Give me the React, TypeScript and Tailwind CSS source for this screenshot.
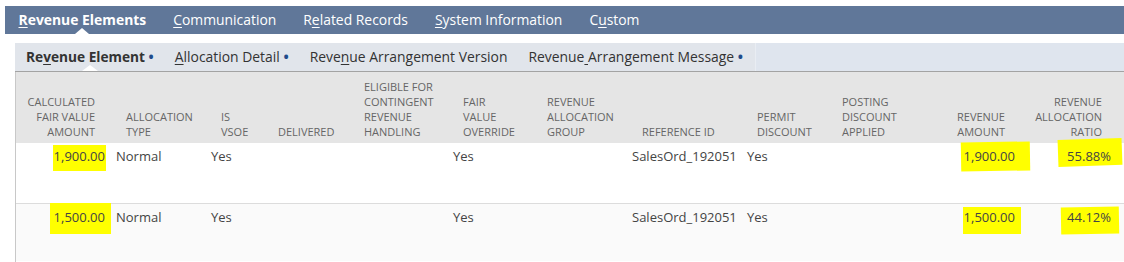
import React from "react";

const topTabs = [
  { pre: "", u: "R", post: "evenue Elements", active: true },
  { pre: "", u: "C", post: "ommunication" },
  { pre: "R", u: "e", post: "lated Records" },
  { pre: "", u: "S", post: "ystem Information" },
  { pre: "C", u: "u", post: "stom" },
];

const subTabs = [
  { pre: "Re", u: "v", post: "enue Element", dot: true, active: true },
  { pre: "", u: "A", post: "llocation Detail", dot: true },
  { pre: "Reve", u: "n", post: "ue Arrangement Version" },
  { pre: "Revenue", u: " ", post: "Arrangement Message", dot: true },
];

// header cells: label lines, alignment
const columns = [
  { w: "w-[95px]", lines: ["Calculated", "Fair Value", "Amount"], right: true },
  { w: "w-[95px]", lines: ["Allocation", "Type"] },
  { w: "w-[57px]", lines: ["Is", "VSOE"] },
  { w: "w-[86px]", lines: ["Delivered"] },
  { w: "w-[99px]", lines: ["Eligible For", "Contingent", "Revenue", "Handling"] },
  { w: "w-[84px]", lines: ["Fair", "Value", "Override"] },
  { w: "w-[95px]", lines: ["Revenue", "Allocation", "Group"] },
  { w: "w-[115px]", lines: ["Reference ID"] },
  { w: "w-[85px]", lines: ["Permit", "Discount"] },
  { w: "w-[94px]", lines: ["Posting", "Discount", "Applied"] },
  { w: "w-[100px]", lines: ["Revenue", "Amount"], right: true },
  { w: "", lines: ["Revenue", "Allocation", "Ratio"], right: true, last: true },
];

function Highlight({ text, box }: { text: string; box: string }) {
  return (
    <span className="relative inline-block">
      <span className={"absolute bg-[#ffff00] " + box} />
      <span className="relative">{text}</span>
    </span>
  );
}

function Cell({ children, right }: { children?: React.ReactNode; right?: boolean }) {
  return (
    <td className={"align-top pt-[4px] pl-[5px] whitespace-nowrap " + (right ? "text-right pr-[6px]" : "text-left pr-[5px]")}>
      {children}
    </td>
  );
}

export default function App() {
  const rows = [
    {
      bg: "bg-white border-b border-[#dcdcdc] h-[60px]",
      amount: <Highlight text="1,900.00" box="left-[-1px] right-[-1px] top-[-2px] bottom-[-6px]" />,
      rev: <Highlight text="1,900.00" box="left-[-3px] right-[-15px] top-[-5px] bottom-[-6px] rotate-[-1deg]" />,
      ratio: <Highlight text="55.88%" box="left-[-9px] right-[-11px] top-[-8px] bottom-[-1px] rotate-[-2deg]" />,
    },
    {
      bg: "bg-[#fafafa] h-[58px]",
      amount: <Highlight text="1,500.00" box="left-[-4px] right-[-6px] top-[-5px] bottom-[-8px]" />,
      rev: <Highlight text="1,500.00" box="left-[-1px] right-[-6px] top-[-1px] bottom-[-8px]" />,
      ratio: <Highlight text="44.12%" box="left-[-6px] right-[-8px] top-[-1px] bottom-[-8px] rotate-[-1deg]" />,
    },
  ];

  return (
    <div className="w-[1124px] h-[262px] overflow-hidden bg-white font-['Open_Sans',sans-serif]">
      {/* main tabs */}
      <div className="pt-[6px] pl-[5px]">
        <nav className="h-[28px] bg-[#607799] flex items-stretch text-white text-[13.9px]">
          {topTabs.map((t) => (
            <div
              key={t.post}
              className={"relative flex items-center px-[13.5px] " + (t.active ? "font-bold" : "")}
            >
              <span>
                {t.pre}
                <u className="underline-offset-2">{t.u}</u>
                {t.post}
              </span>
              {t.active && (
                <span className="absolute bottom-0 left-1/2 -translate-x-1/2 w-0 h-0 border-x-[7px] border-x-transparent border-b-[6px] border-b-white" />
              )}
            </div>
          ))}
        </nav>
      </div>

      <div className="mt-[9px] ml-[15px]">
        {/* sub tabs */}
        <div className="h-[29px] bg-[#dfe5ee] border-b border-[#a3a3a3] flex">
          <div className="flex items-stretch pl-[0.5px] pr-[2px] bg-[#e1e5eb] border-r border-[#e9edf3] text-[#333]">
            {subTabs.map((t) => (
              <div
                key={t.post}
                className={"relative flex items-center pt-[1px] px-[10.5px] " + (t.active ? "font-bold text-[13.7px]" : "text-[13.9px]")}
              >
                <span className="whitespace-pre">
                  {t.pre}
                  <u className="underline-offset-2">{t.u}</u>
                  {t.post}
                  {t.dot && <span className="text-[#1f4b8a] font-bold"> •</span>}
                </span>
                {t.active && (
                  <span className="absolute bottom-0 left-1/2 -translate-x-1/2 w-0 h-0 border-x-[8px] border-x-transparent border-b-[6px] border-b-white" />
                )}
              </div>
            ))}
          </div>
        </div>

        {/* table */}
        <div className="border-l border-[#c8c8c8] h-[200px]">
          <table className="w-full table-fixed border-collapse text-[13px] leading-[18px] text-[#444]">
            <colgroup>
              {columns.map((c, i) => (
                <col key={i} className={c.w} />
              ))}
            </colgroup>
            <thead>
              <tr className="bg-[#e5e5e5] h-[71px]">
                {columns.map((c, i) => (
                  <th
                    key={i}
                    className={
                      "align-bottom pb-[4px] font-normal uppercase text-[11px] leading-[15px] text-[#666] whitespace-nowrap " +
                      (c.last ? "text-right pr-[22px] pl-[5px]" : c.right ? "text-right pr-[16px] pl-[5px]" : "text-left pl-[15px] pr-[2px]")
                    }
                  >
                    {c.lines.map((l) => (
                      <div key={l}>{l}</div>
                    ))}
                  </th>
                ))}
              </tr>
            </thead>
            <tbody>
              {rows.map((r, i) => (
                <tr key={i} className={r.bg}>
                  <Cell right>{r.amount}</Cell>
                  <Cell>Normal</Cell>
                  <Cell>Yes</Cell>
                  <Cell />
                  <Cell />
                  <Cell>Yes</Cell>
                  <Cell />
                  <Cell>SalesOrd_192051</Cell>
                  <Cell>Yes</Cell>
                  <Cell />
                  <Cell right>{r.rev}</Cell>
                  <td className="align-top pt-[4px] pl-[5px] pr-[13px] text-right whitespace-nowrap">{r.ratio}</td>
                </tr>
              ))}
            </tbody>
          </table>
        </div>
      </div>
    </div>
  );
}
